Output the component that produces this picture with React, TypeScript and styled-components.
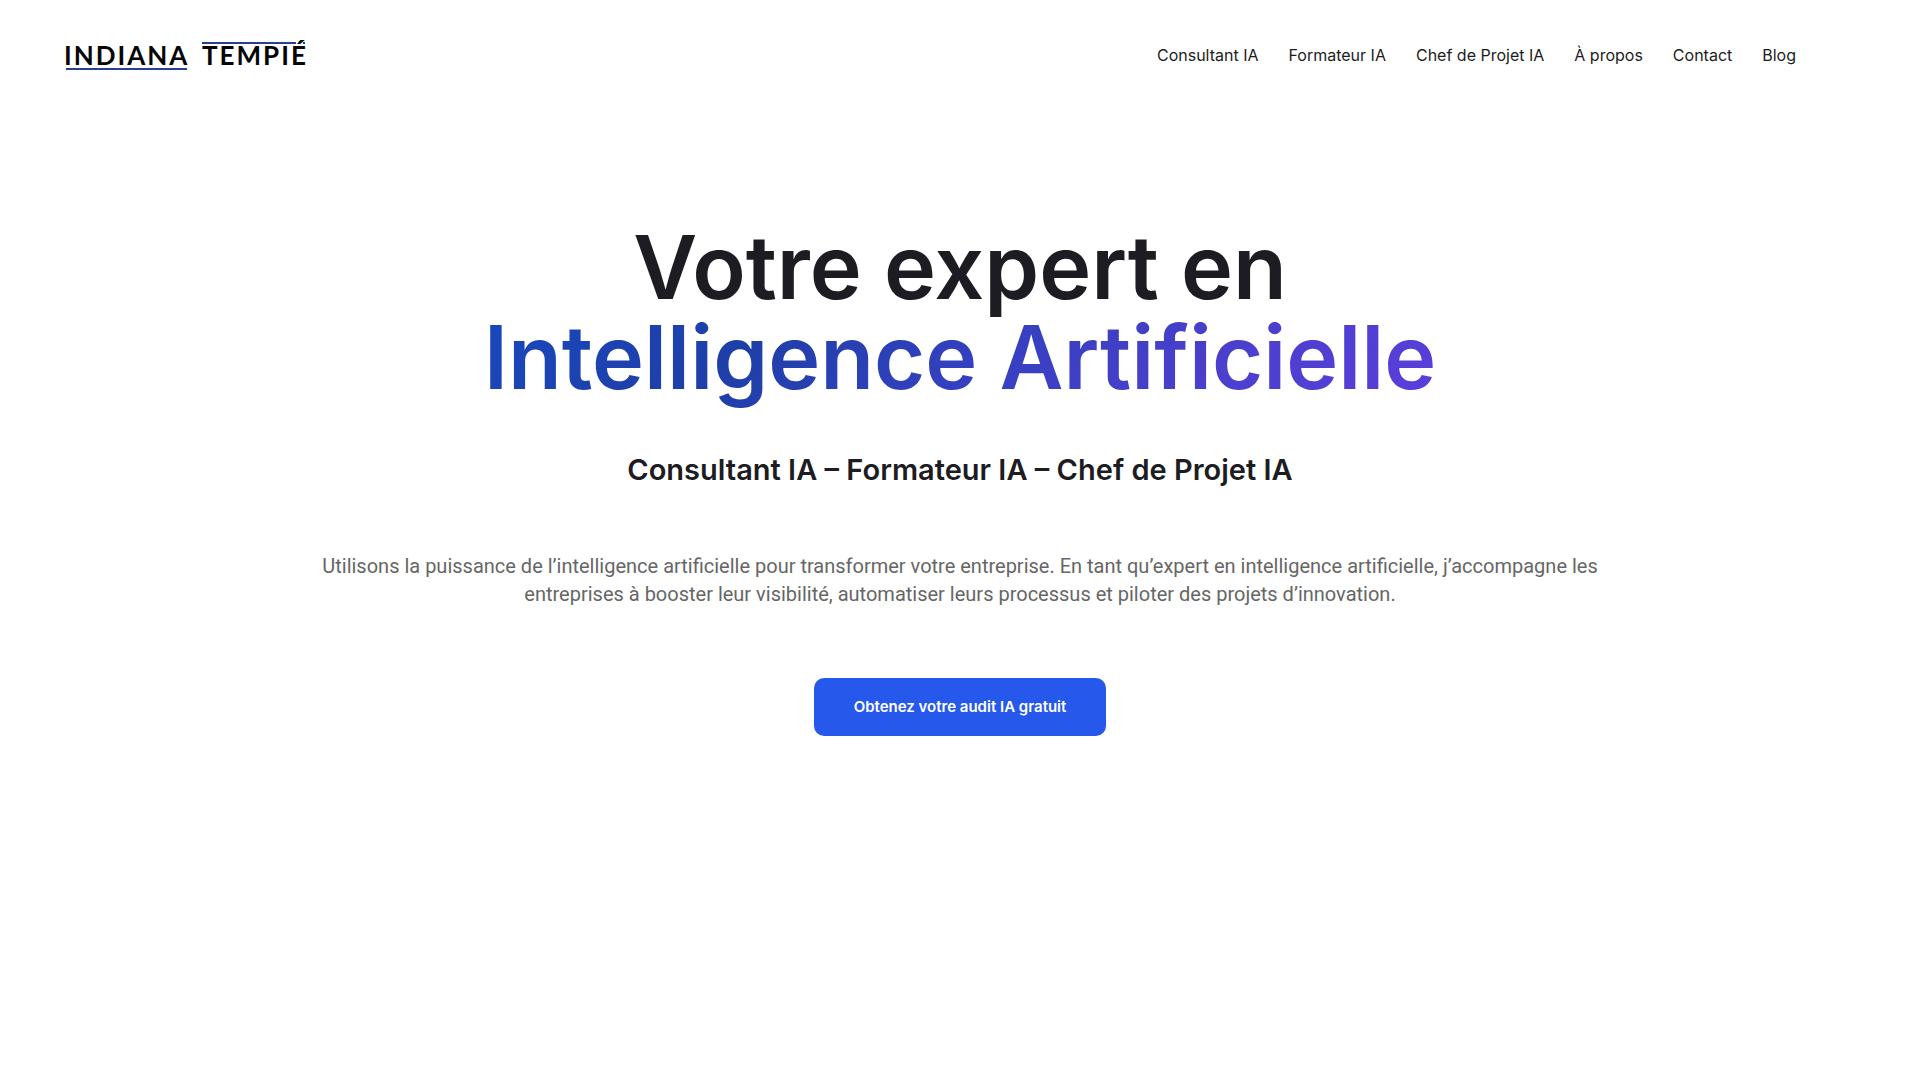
import React from "react";
import styled, { createGlobalStyle } from "styled-components";

const GlobalStyle = createGlobalStyle`
  *, *::before, *::after { box-sizing: border-box; }
  body {
    margin: 0;
    background: #ffffff;
    color: #1c1c22;
    font-family: Inter, "Liberation Sans", sans-serif;
  }
`;

const Header = styled.header`
  display: flex;
  align-items: center;
  justify-content: space-between;
  height: 110px;
  padding: 0 124px 0 64px;
`;

const LogoLink = styled.a`
  display: flex;
  color: #060606;
  text-decoration: none;
`;

const LogoArt = styled.svg`
  display: block;
  width: 244px;
  height: 44px;
  font-family: Lato, sans-serif;
  font-size: 26px;
  font-weight: 700;
  letter-spacing: 2px;
`;

const NavList = styled.ul`
  display: flex;
  gap: 30px;
  margin: 0;
  padding: 0;
  list-style: none;
`;

const NavLink = styled.a`
  color: #1c1c22;
  font-size: 16px;
  line-height: 24px;
  text-decoration: none;
  white-space: nowrap;
`;

const Hero = styled.main`
  display: flex;
  flex-direction: column;
  align-items: center;
  padding: 112px 24px 80px;
  text-align: center;
`;

const Title = styled.h1`
  margin: 0;
  font-size: 88px;
  font-weight: 600;
  line-height: 90px;
`;

const GradientText = styled.span`
  display: block;
  padding-bottom: 10px;
  background: linear-gradient(135deg, #1a47bd 0%, #1e3fa8 28%, #3340bf 50%, #4a3fcc 74%, #5b3edd 100%);
  background-clip: text;
  -webkit-background-clip: text;
  color: transparent;
`;

const Subtitle = styled.h2`
  margin: 38px 0 0;
  font-size: 29px;
  font-weight: 600;
  line-height: 40px;
`;

const Lead = styled.p`
  max-width: 1300px;
  margin: 62px 0 0;
  color: #666666;
  font-family: Roboto, "Liberation Sans", sans-serif;
  font-size: 20px;
  line-height: 28px;
`;

const CallToAction = styled.button`
  margin-top: 70px;
  padding: 17px 40px;
  border: 0;
  border-radius: 10px;
  background: #2659eb;
  color: #ffffff;
  font-family: inherit;
  font-size: 15px;
  font-weight: 600;
  line-height: 24px;
  cursor: pointer;
`;

const links = [
  { label: "Consultant IA", href: "#consultant" },
  { label: "Formateur IA", href: "#formateur" },
  { label: "Chef de Projet IA", href: "#chef-de-projet" },
  { label: "À propos", href: "#a-propos" },
  { label: "Contact", href: "#contact" },
  { label: "Blog", href: "#blog" },
];

function Logo() {
  return (
    <LogoLink href="#accueil">
      <LogoArt viewBox="0 0 244 44">
        <rect x="2" y="35" width="121" height="2" fill="#27408f" />
        <rect x="138" y="9" width="94" height="2" fill="#27408f" />
        <rect x="239" y="9" width="2" height="2" fill="#27408f" />
        <text x="0" y="32" fill="currentColor">INDIANA</text>
        <text x="138" y="32" fill="currentColor">TEMPIÉ</text>
      </LogoArt>
    </LogoLink>
  );
}

export default function App() {
  return (
    <>
      <GlobalStyle />
      <Header>
        <Logo />
        <nav>
          <NavList>
            {links.map((link) => (
              <li key={link.href}>
                <NavLink href={link.href}>{link.label}</NavLink>
              </li>
            ))}
          </NavList>
        </nav>
      </Header>
      <Hero>
        <Title>
          Votre expert en
          <GradientText>Intelligence Artificielle</GradientText>
        </Title>
        <Subtitle>Consultant IA – Formateur IA – Chef de Projet IA</Subtitle>
        <Lead>
          Utilisons la puissance de l’intelligence artificielle pour transformer votre entreprise. En tant
          qu’expert en intelligence artificielle, j’accompagne les entreprises à booster leur visibilité,
          automatiser leurs processus et piloter des projets d’innovation.
        </Lead>
        <CallToAction type="button">Obtenez votre audit IA gratuit</CallToAction>
      </Hero>
    </>
  );
}
